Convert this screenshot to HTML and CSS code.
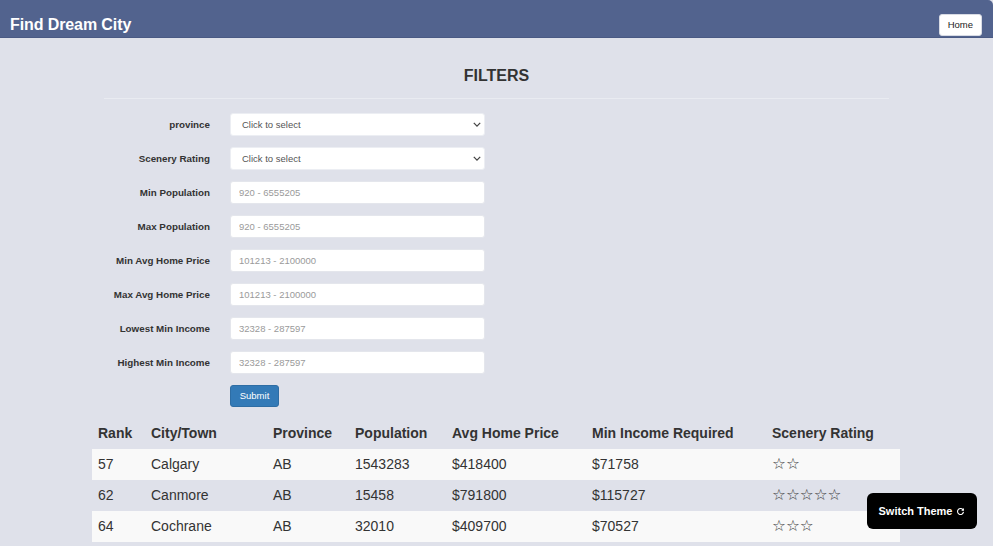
FILE: index.html
```html
<!DOCTYPE html>
<html lang="en">
<head>
<meta charset="utf-8">
<title>Find Dream City</title>
<link rel="stylesheet" href="styles.css">
</head>
<body>
<div class="page">
  <header class="topbar">
    <span class="brand">Find Dream City</span>
    <button class="home-btn" type="button">Home</button>
  </header>
  <main class="main">
    <section class="filters">
      <h2 class="filters-title">FILTERS</h2>
      <hr class="divider">
      <form class="filter-form">
        <label class="f-label">province</label>
        <div class="select-wrap">
          <select class="f-control f-select"><option>Click to select</option></select>
          <svg class="chev" viewBox="0 0 10 6" width="8" height="5"><path d="M1 1l4 4 4-4" fill="none" stroke="#444" stroke-width="1.6"/></svg>
        </div>
        <label class="f-label">Scenery Rating</label>
        <div class="select-wrap">
          <select class="f-control f-select"><option>Click to select</option></select>
          <svg class="chev" viewBox="0 0 10 6" width="8" height="5"><path d="M1 1l4 4 4-4" fill="none" stroke="#444" stroke-width="1.6"/></svg>
        </div>
        <label class="f-label">Min Population</label>
        <input class="f-control" type="text" placeholder="920 - 6555205">
        <label class="f-label">Max Population</label>
        <input class="f-control" type="text" placeholder="920 - 6555205">
        <label class="f-label">Min Avg Home Price</label>
        <input class="f-control" type="text" placeholder="101213 - 2100000">
        <label class="f-label">Max Avg Home Price</label>
        <input class="f-control" type="text" placeholder="101213 - 2100000">
        <label class="f-label">Lowest Min Income</label>
        <input class="f-control" type="text" placeholder="32328 - 287597">
        <label class="f-label">Highest Min Income</label>
        <input class="f-control" type="text" placeholder="32328 - 287597">
        <span></span>
        <div><button class="submit-btn" type="button">Submit</button></div>
      </form>
    </section>
    <table class="results">
      <colgroup>
        <col class="c-rank"><col class="c-city"><col class="c-prov"><col class="c-pop"><col class="c-price"><col class="c-inc"><col class="c-scen">
      </colgroup>
      <thead>
        <tr><th>Rank</th><th>City/Town</th><th>Province</th><th>Population</th><th>Avg Home Price</th><th>Min Income Required</th><th>Scenery Rating</th></tr>
      </thead>
      <tbody>
        <tr><td>57</td><td>Calgary</td><td>AB</td><td>1543283</td><td>$418400</td><td>$71758</td><td class="stars">☆☆</td></tr>
        <tr><td>62</td><td>Canmore</td><td>AB</td><td>15458</td><td>$791800</td><td>$115727</td><td class="stars">☆☆☆☆☆</td></tr>
        <tr><td>64</td><td>Cochrane</td><td>AB</td><td>32010</td><td>$409700</td><td>$70527</td><td class="stars">☆☆☆</td></tr>
      </tbody>
    </table>
  </main>
</div>
<button class="theme-btn" type="button">Switch Theme
  <svg class="theme-icon" viewBox="0 0 12 12" width="9" height="9"><path d="M9.6 4.2A4 4 0 1 0 10 6.6" fill="none" stroke="#fff" stroke-width="1.5"/><path d="M10.6 1.4v3.6H7z" fill="#fff"/></svg>
</button>
</body>
</html>
```

FILE: styles.css
```css
* { box-sizing: border-box; }
html, body { margin: 0; padding: 0; background: #ffffff; height: 100%; overflow: hidden; }
body { font-family: "Liberation Sans", Arial, Helvetica, sans-serif; color: #333; }

.page {
  width: 993px;
  height: 546px;
  background: #dfe1ea;
  overflow: hidden;
}

.topbar {
  height: 38px;
  background: #52638e;
  border-top-right-radius: 5px;
  border-bottom: 1px solid #4a5a84;
  display: flex;
  align-items: center;
  justify-content: space-between;
  padding: 2px 11px 0 10px;
}
.brand {
  margin-top: 10px;
  color: #fff;
  font-size: 16px;
  font-weight: bold;
  letter-spacing: -0.1px;
}
.home-btn {
  margin-top: 10px;
  height: 22px;
  padding: 0 8px;
  background: #fff;
  border: 1px solid #d8dbe4;
  border-radius: 3px;
  font-family: inherit;
  font-size: 9.5px;
  color: #222;
}

.main { padding-top: 28px; }

.filters { width: 785px; margin: 0 auto; }
.filters-title {
  margin: 0;
  text-align: center;
  font-size: 16px;
  line-height: 20px;
  font-weight: bold;
  color: #333;
}
.divider {
  margin: 12px 0 14px;
  border: 0;
  border-top: 1px solid #e9ebf1;
  height: 0;
}

.filter-form {
  display: grid;
  grid-template-columns: 106px 255px;
  column-gap: 20px;
  row-gap: 11px;
  align-items: center;
}
.f-label {
  text-align: right;
  font-size: 9.8px;
  font-weight: bold;
  color: #333;
}
.f-control {
  width: 255px;
  height: 23px;
  background: #fff;
  border: 1px solid #e4e6ec;
  border-radius: 3px;
  font-family: inherit;
  font-size: 9.5px;
  color: #555;
  padding: 0 8px;
  margin: 0;
  outline: none;
}
.f-control::placeholder { color: #9a9a9a; }
.select-wrap { position: relative; width: 255px; height: 23px; }
.f-select {
  -webkit-appearance: none;
  appearance: none;
  padding-left: 11px;
  color: #555;
  border-color: #eceef3;
}
.chev { position: absolute; right: 4px; top: 9px; pointer-events: none; }

.submit-btn {
  margin-top: -1px;
  width: 49px;
  height: 22px;
  background: #337ab7;
  border: 1px solid #2e6da4;
  border-radius: 3px;
  color: #fff;
  font-family: inherit;
  font-size: 9.5px;
  padding: 0;
}

.results {
  margin: 11px 0 0 92px;
  width: 808px;
  border-collapse: collapse;
  font-size: 14px;
  color: #333;
}
.c-rank { width: 53px; }
.c-city { width: 122px; }
.c-prov { width: 82px; }
.c-pop { width: 97px; }
.c-price { width: 140px; }
.c-inc { width: 180px; }
.c-scen { width: 134px; }
.results th, .results td {
  text-align: left;
  padding: 0 6px;
  height: 31px;
  white-space: nowrap;
}
.results th { font-weight: bold; height: 31px; }
.results tbody tr:nth-child(odd) { background: #f9f9f9; }
.stars { font-family: "DejaVu Sans", sans-serif; font-size: 15.5px; color: #444; letter-spacing: 0; }

.theme-btn {
  position: fixed;
  right: 19px;
  bottom: 17px;
  width: 110px;
  height: 36px;
  background: #000;
  color: #fff;
  border: 0;
  border-radius: 6px;
  font-family: inherit;
  font-size: 11px;
  font-weight: bold;
  display: flex;
  align-items: center;
  justify-content: center;
  gap: 4px;
  padding: 0;
}
.theme-icon { display: block; margin-top: 1px; }
```
